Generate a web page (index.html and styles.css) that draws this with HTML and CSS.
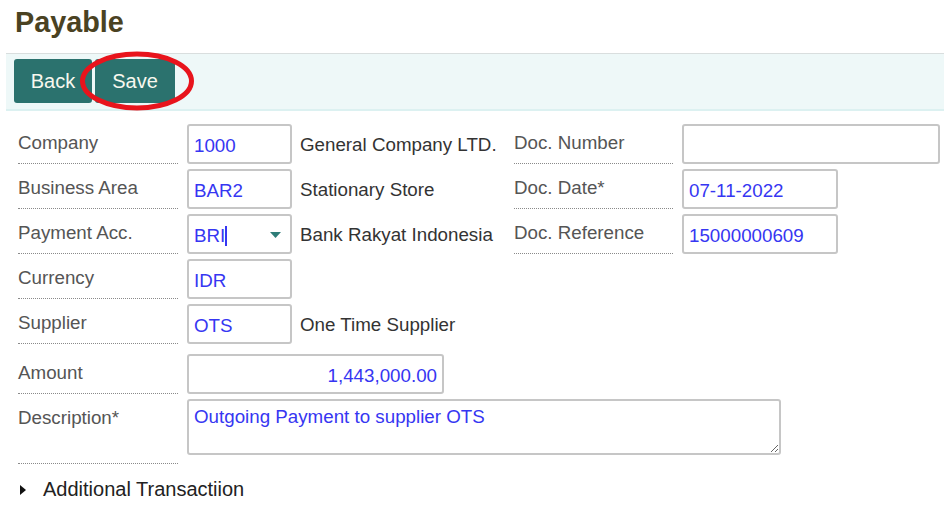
FILE: index.html
```html
<!DOCTYPE html>
<html>
<head>
<meta charset="utf-8">
<title>Payable</title>
<link rel="stylesheet" href="styles.css">
</head>
<body>
<h1 class="title">Payable</h1>
<div class="toolbar">
  <button class="btn">Back</button>
  <button class="btn btn-save">Save</button>
  <svg class="highlight" width="118" height="62" viewBox="0 0 118 62"><ellipse cx="58" cy="30" rx="54.5" ry="27" fill="none" stroke="#e8141c" stroke-width="5"/></svg>
</div>
<form class="form">
  <div class="grid-top">
    <div class="lbl">Company</div>
    <input class="fld w105" value="1000" readonly>
    <div class="desc">General Company LTD.</div>
    <div class="lbl">Doc. Number</div>
    <input class="fld w258" value="" readonly>

    <div class="lbl">Business Area</div>
    <input class="fld w105" value="BAR2" readonly>
    <div class="desc">Stationary Store</div>
    <div class="lbl">Doc. Date*</div>
    <input class="fld w156" value="07-11-2022" readonly>

    <div class="lbl">Payment Acc.</div>
    <div class="fld w105 select"><span class="val">BRI</span><span class="cursor"></span><svg class="caret" width="11" height="6" viewBox="0 0 11 6"><path d="M0 0H11L5.5 6Z" fill="#2e7d78"/></svg></div>
    <div class="desc">Bank Rakyat Indonesia</div>
    <div class="lbl">Doc. Reference</div>
    <input class="fld w156" value="15000000609" readonly>

    <div class="lbl first">Currency</div>
    <input class="fld w105" value="IDR" readonly>

    <div class="lbl first">Supplier</div>
    <input class="fld w105" value="OTS" readonly>
    <div class="desc">One Time Supplier</div>
  </div>
  <div class="grid-bottom">
    <div class="lbl">Amount</div>
    <input class="fld w257 num" value="1,443,000.00" readonly>
    <div class="lbl tall">Description*</div>
    <textarea class="area" readonly>Outgoing Payment to supplier OTS</textarea>
  </div>
  <div class="additional"><span class="tri"></span>Additional Transactiion</div>
</form>
</body>
</html>
```
FILE: styles.css
```css
* { box-sizing: border-box; }
body {
  margin: 0;
  font-family: "Liberation Sans", Arial, sans-serif;
  font-size: 18.75px;
  color: #333;
  background: #fff;
  width: 944px;
  height: 522px;
  overflow: hidden;
}
.title {
  margin: 6px 0 14px 15px;
  font-size: 28.8px;
  font-weight: bold;
  color: #4a4222;
  line-height: 33px;
}
.toolbar {
  position: relative;
  margin-left: 6px;
  border-top: 1.5px solid #d9dede;
  border-bottom: 2px solid #dcf1f1;
  background: #eef8f8;
  padding: 5px 8px 6px;
  display: flex;
  gap: 3px;
}
.btn {
  font-family: "Liberation Sans", Arial, sans-serif;
  font-size: 20px;
  color: #f8f8ee;
  background: #2b726e;
  border: none;
  border-radius: 3px;
  height: 44px;
  width: 78px;
  padding: 0;
}
.btn-save { width: 80px; }
.highlight {
  position: absolute;
  left: 73px;
  top: -3px;
}
.form {
  margin: 13px 0 0 18px;
}
.grid-top {
  display: grid;
  grid-template-columns: 169px 113px 214px 168px 258px;
  grid-auto-rows: 40px;
  row-gap: 5px;
}
.lbl {
  margin-right: 9px;
  padding-top: 8px;
  line-height: 22px;
  color: #555;
  border-bottom: 1px dotted #8a8a8a;
  white-space: nowrap;
}
.lbl.first { grid-column: 1; }
.desc {
  padding-top: 10px;
  line-height: 22px;
  color: #333;
  white-space: nowrap;
}
.fld {
  height: 40px;
  border: 2px solid #c6c6c6;
  border-radius: 3px;
  font: inherit;
  color: #3636f2;
  padding: 4px 5px 0;
  background: #fff;
  outline: none;
}
.w105 { width: 105px; }
.w156 { width: 156px; }
.w257 { width: 257px; }
.w258 { width: 258px; }
.num { text-align: right; }
.select {
  display: flex;
  align-items: center;
  padding-right: 9px;
}
.select .val { line-height: 22px; }
.cursor {
  width: 2px;
  height: 20px;
  background: #3636f2;
}
.caret { margin-left: auto; margin-top: -3px; }
.grid-bottom {
  margin-top: 10px;
  display: grid;
  grid-template-columns: 169px 1fr;
  row-gap: 5px;
  align-items: start;
}
.grid-bottom .lbl { height: 40px; }
.grid-bottom .lbl.tall { height: 65px; }
.area {
  width: 594px;
  height: 56px;
  border: 2px solid #c6c6c6;
  border-radius: 3px;
  font: inherit;
  color: #3636f2;
  padding: 5px 5px;
  resize: both;
  outline: none;
  line-height: 22px;
}
.additional {
  margin-top: 14px;
  font-size: 20px;
  line-height: 23px;
  color: #222;
  display: flex;
  align-items: center;
}
.tri {
  width: 0;
  height: 0;
  border-left: 6px solid #111;
  border-top: 5px solid transparent;
  border-bottom: 5px solid transparent;
  margin: 0 17px 0 2px;
}
```
